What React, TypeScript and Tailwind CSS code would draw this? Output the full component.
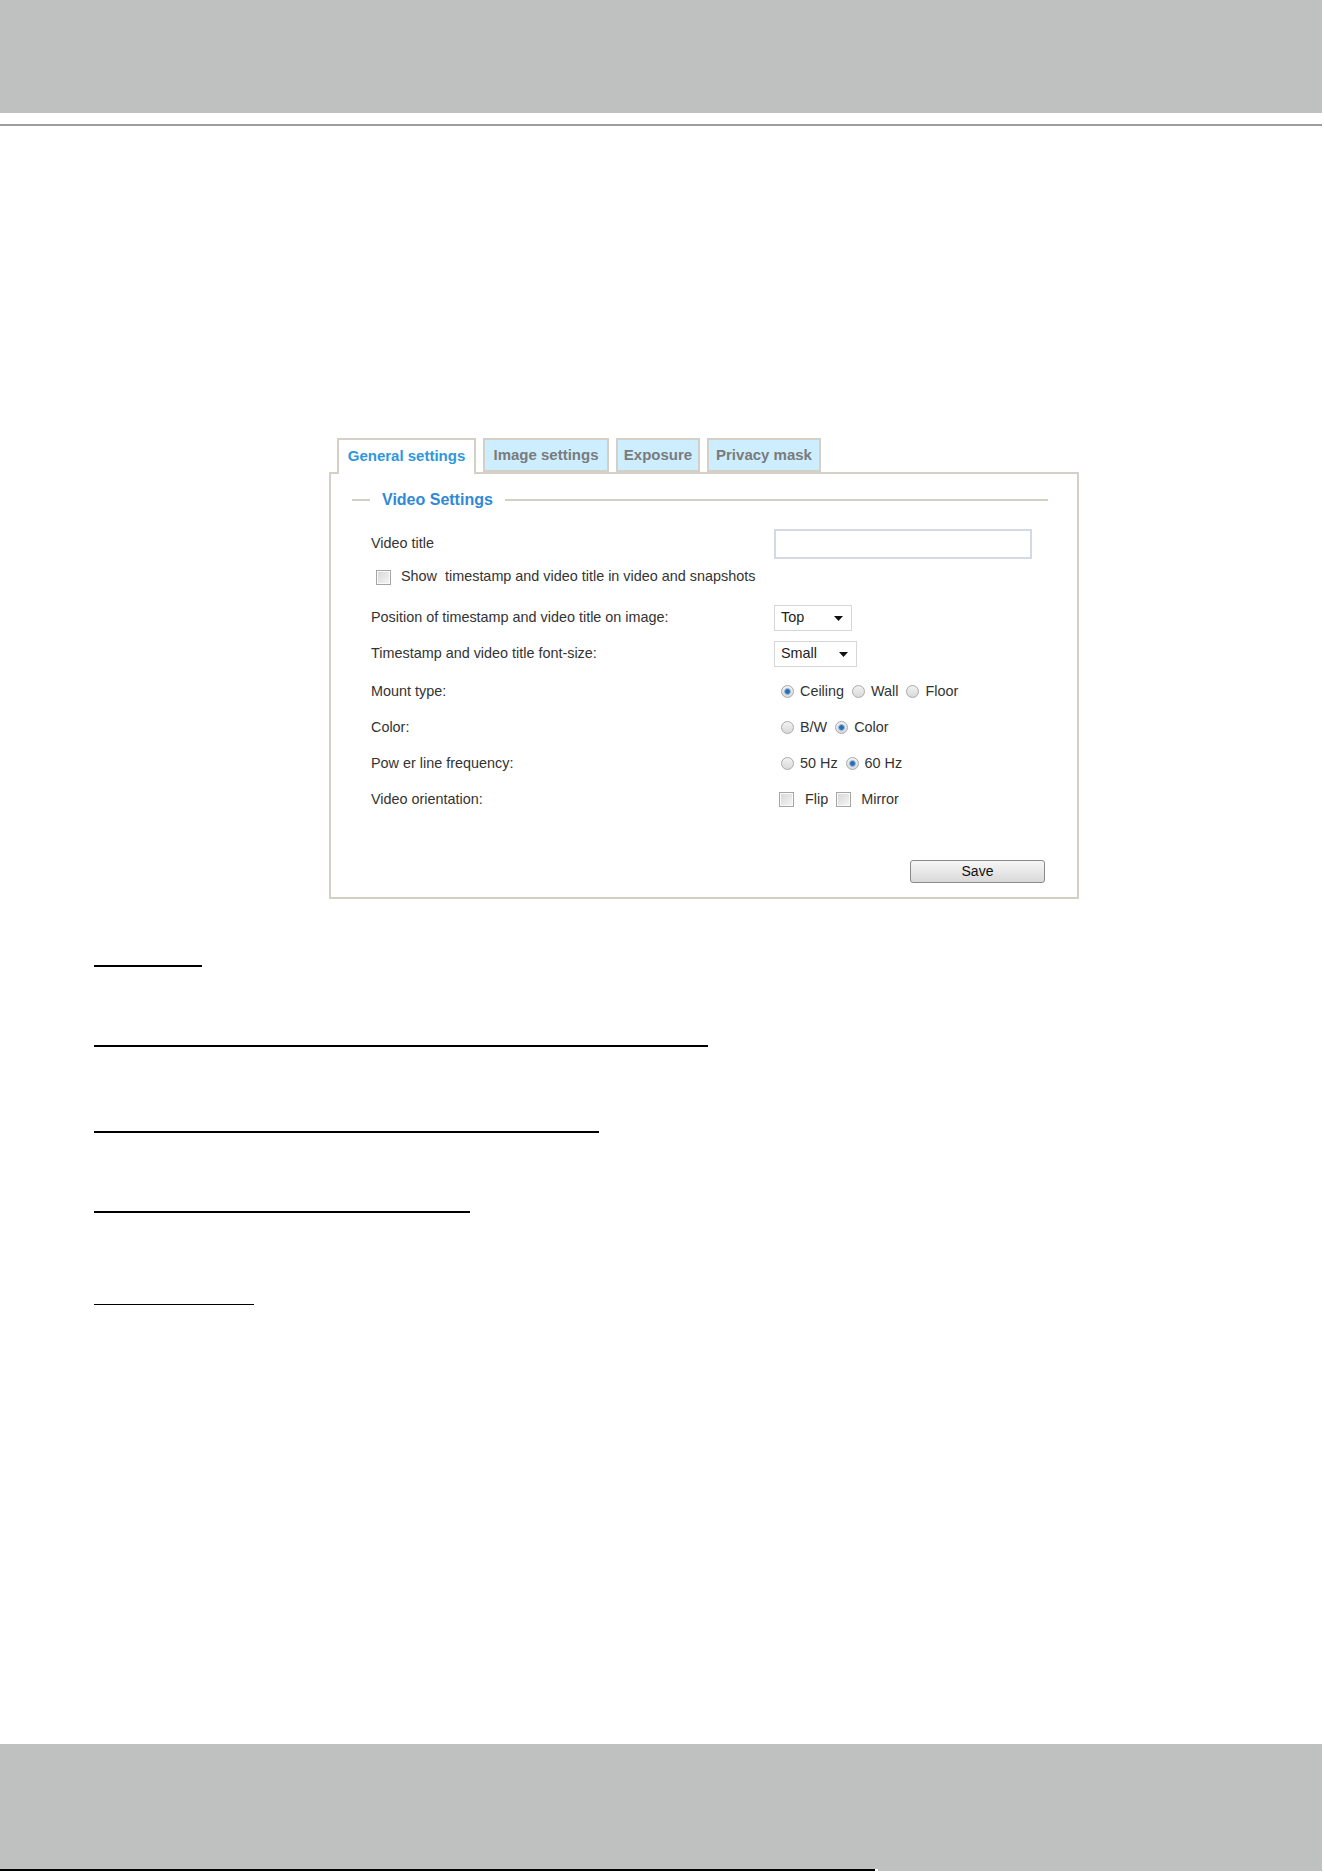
import { ReactNode } from "react";

const font = "font-['Liberation_Sans',Arial,sans-serif]";

function Radio({ checked }: { checked?: boolean }) {
  return (
    <span className="flex h-[13px] w-[13px] items-center justify-center rounded-full border border-[#a9a9a9] bg-gradient-to-b from-[#f2f2f2] to-[#d9d9d9]">
      {checked && (
        <span className="h-[7px] w-[7px] rounded-full border border-[#9cc3e6] bg-[#2a6db3]" />
      )}
    </span>
  );
}

function Check() {
  return (
    <span className="flex h-[15px] w-[15px] items-center justify-center border border-[#a5a5a5] bg-[#fafafa]">
      <span className="h-[11px] w-[11px] bg-gradient-to-br from-[#d8d8d8] to-[#f4f4f4]" />
    </span>
  );
}

function Select({ value, width }: { value: string; width: string }) {
  return (
    <div
      className={`flex h-[26px] ${width} items-center justify-between border border-[#d6d6d6] bg-white pl-[6px] pr-[8px] text-[14.4px] text-[#222]`}
    >
      <span>{value}</span>
      <svg width="9" height="5" viewBox="0 0 9 5">
        <path d="M0 0h9L4.5 5z" fill="#111" />
      </svg>
    </div>
  );
}

function Row({ label, children, h }: { label: string; children: ReactNode; h: string }) {
  return (
    <div className={`flex ${h} items-center`}>
      <div className="w-[443px] shrink-0 pl-[40px]">{label}</div>
      <div className="flex items-center">{children}</div>
    </div>
  );
}

function Opt({ label, checked }: { label: string; checked?: boolean }) {
  return (
    <span className="mr-[8px] flex items-center gap-[6px]">
      <Radio checked={checked} />
      <span>{label}</span>
    </span>
  );
}

export default function App() {
  const tabs = [
    { name: "Image settings", w: "w-[126px]" },
    { name: "Exposure", w: "w-[84px]" },
    { name: "Privacy mask", w: "w-[114px]" },
  ];

  return (
    <div className={`${font} min-h-[1872px] w-[1324px] bg-white`}>
      <div className="h-[113px] w-[1322px] bg-[#bfc1c0]" />
      <div className="mt-[11px] h-[2px] w-[1322px] bg-[#9d9d9d]" />

      {/* camera settings panel */}
      <div className="ml-[329px] mt-[312px] w-[750px]">
        <div className="relative z-10 flex gap-[7px] pl-[8px]">
          <div className="flex h-[36px] w-[139px] items-center justify-center border-2 border-b-0 border-[#d4d0c8] bg-white pb-[2px] text-[15px] font-bold text-[#2f97dd]">
            General settings
          </div>
          {tabs.map((t) => (
            <div
              key={t.name}
              className={`flex h-[34px] ${t.w} items-center justify-center border-2 border-[#d4d0c8] bg-[#cdeeff] text-[15px] font-bold text-[#7b7b7b]`}
            >
              {t.name}
            </div>
          ))}
        </div>
        <div className="-mt-[2px] border-2 border-[#d4d0c8] pb-[14px] text-[14.4px] text-[#333]">
          <div className="mt-[16px] flex h-[20px] items-center pl-[21px] pr-[29px]">
            <div className="h-[2px] w-[18px] bg-[#d4d0c8]" />
            <div className="px-[12px] text-[16px] font-bold text-[#3089d6]">Video Settings</div>
            <div className="h-[2px] flex-1 bg-[#d4d0c8]" />
          </div>

          <div className="mt-[19px]">
            <Row label="Video title" h="h-[30px]">
              <div className="h-[30px] w-[258px] border-2 border-[#d2d9e3] bg-white" />
            </Row>
          </div>
          <div className="mt-[8px] flex h-[20px] items-center gap-[10px] pl-[45px]">
            <Check />
            <span>Show&nbsp; timestamp and video title in video and snapshots</span>
          </div>
          <div className="mt-[18px]">
            <Row label="Position of timestamp and video title on image:" h="h-[26px]">
              <Select value="Top" width="w-[78px]" />
            </Row>
          </div>
          <div className="mt-[10px]">
            <Row label="Timestamp and video title font-size:" h="h-[26px]">
              <Select value="Small" width="w-[83px]" />
            </Row>
          </div>
          <div className="mt-[7px]">
            <Row label="Mount type:" h="h-[36px]">
              <div className="flex items-center pl-[7px]">
                <Opt label="Ceiling" checked />
                <Opt label="Wall" />
                <Opt label="Floor" />
              </div>
            </Row>
            <Row label="Color:" h="h-[36px]">
              <div className="flex items-center pl-[7px]">
                <Opt label="B/W" />
                <Opt label="Color" checked />
              </div>
            </Row>
            <Row label="Pow er line frequency:" h="h-[36px]">
              <div className="flex items-center pl-[7px]">
                <Opt label="50 Hz" />
                <Opt label="60 Hz" checked />
              </div>
            </Row>
            <Row label="Video orientation:" h="h-[35px]">
              <div className="flex items-center pl-[5px]">
                <Check />
                <span className="ml-[11px] mr-[8px]">Flip</span>
                <Check />
                <span className="ml-[10px]">Mirror</span>
              </div>
            </Row>
          </div>

          <div className="mt-[43px] flex justify-end pr-[32px]">
            <button className="h-[23px] w-[135px] rounded-[3px] border border-[#8a8a8a] bg-gradient-to-b from-[#f7f7f7] to-[#d9d9d9] text-[14px] text-[#111]">
              Save
            </button>
          </div>
        </div>
      </div>

      {/* section headings (underlines only) */}
      <div className="ml-[94px] mt-[66px] flex flex-col">
        <div className="h-[2px] w-[108px] bg-black" />
        <div className="mt-[78px] h-[2px] w-[614px] bg-black" />
        <div className="mt-[84px] h-[2px] w-[505px] bg-black" />
        <div className="mt-[78px] h-[2px] w-[376px] bg-black" />
        <div className="mt-[91px] h-px w-[160px] bg-black" />
      </div>

      <div className="mt-[439px] h-[125px] w-[1322px] bg-[#bfc1c0]" />
      <div className="flex h-[2px] w-[1322px]">
        <div className="w-[875px] bg-black" />
        <div className="w-[3px] bg-white" />
        <div className="flex-1 bg-[#bfc1c0]" />
      </div>
    </div>
  );
}
